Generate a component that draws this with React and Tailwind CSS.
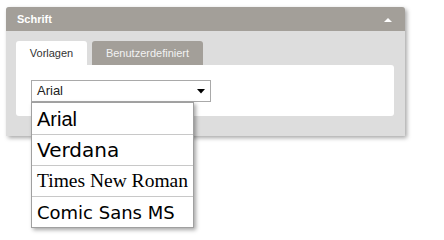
export default function App() {
  const fonts = [
    { name: "Arial", cls: "font-['Liberation_Sans',Arial,sans-serif] text-[20px]" },
    { name: "Verdana", cls: "font-['Verdana','DejaVu_Sans',sans-serif] text-[20px]" },
    { name: "Times New Roman", cls: "font-['Liberation_Serif','Times_New_Roman',serif] text-[19.5px]" },
    { name: "Comic Sans MS", cls: "font-['Comic_Sans_MS','DejaVu_Sans',sans-serif] text-[18px]" },
  ];

  return (
    <div className="w-[444px] h-[240px] bg-white pt-[7px] pl-[6px] font-['Liberation_Sans',Arial,sans-serif]">
      <div className="w-[399px] h-[129px] bg-[#dddddd] rounded-t-[3px] shadow-[2px_2px_4px_rgba(0,0,0,0.35)]">
        <div className="h-[24px] bg-[#a39f99] rounded-t-[3px] flex items-center justify-between pl-[11px] pr-[13px]">
          <span className="text-[11px] font-bold text-white">Schrift</span>
          <svg width="8" height="5" viewBox="0 0 8 5">
            <path d="M0 5 L4 1 L8 5 Z" fill="#fff" />
          </svg>
        </div>
        <div className="pt-[10px] px-[10px]">
          <div className="flex gap-[5px] h-[24px]">
            <div className="w-[71px] bg-white rounded-t-[3px] flex items-center justify-center text-[11px] text-[#333]">
              Vorlagen
            </div>
            <div className="w-[111px] bg-[#a39f99] rounded-t-[3px] flex items-center justify-center text-[11px] text-[#f2f2f2]">
              Benutzerdefiniert
            </div>
          </div>
          <div className="w-[378px] h-[51px] bg-white rounded-b-[3px] rounded-tr-[3px] pt-[15px] pl-[15px]">
            <div className="relative w-[180px] h-[22px] border border-[#a9a9a9] bg-white flex items-center justify-between pl-[5px] pr-[5px]">
              <span className="text-[13px] text-[#222]">Arial</span>
              <svg width="8" height="5" viewBox="0 0 8 5">
                <path d="M0 0 L8 0 L4 4.5 Z" fill="#000" />
              </svg>
              <div className="absolute left-[-1px] top-[21px] w-[163px] bg-white border border-[#a0a0a0] shadow-[2px_2px_4px_rgba(0,0,0,0.35)] z-10">
                {fonts.map((f, i) => (
                  <div
                    key={f.name}
                    className={
                      "h-[31px] flex items-center pl-[5px] text-black whitespace-nowrap " +
                      f.cls +
                      (i > 0 ? " border-t border-[#c8c8c8]" : "")
                    }
                  >
                    {f.name}
                  </div>
                ))}
              </div>
            </div>
          </div>
        </div>
      </div>
    </div>
  );
}
